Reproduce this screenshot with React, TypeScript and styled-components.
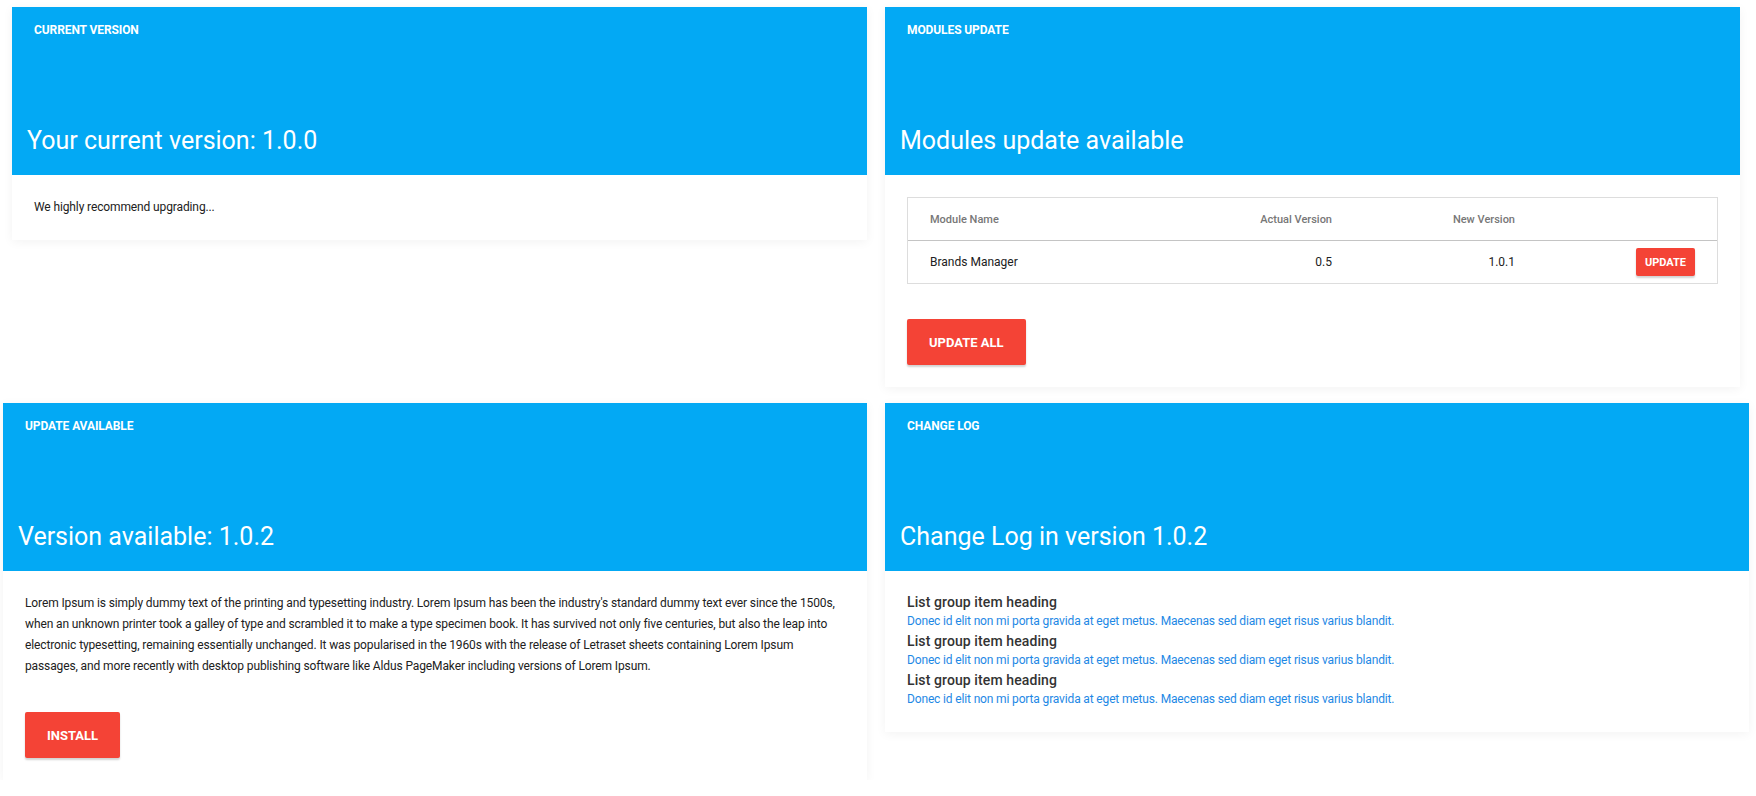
import React from "react";
import styled, { createGlobalStyle } from "styled-components";

const GlobalStyle = createGlobalStyle`
  body {
    margin: 0;
    background: #ffffff;
    font-family: Roboto, "Liberation Sans", Arial, sans-serif;
    color: #212121;
  }
`;

const Board = styled.div`
  display: flex;
  flex-direction: column;
  gap: 16px;
  padding-top: 7px;
`;

const Row = styled.div<{ $left: number; $right: number }>`
  display: flex;
  align-items: flex-start;
  gap: 18px;
  padding: 0 ${(p) => p.$right}px 0 ${(p) => p.$left}px;
`;

const Card = styled.section`
  flex: 1;
  min-width: 0;
  background: #ffffff;
  box-shadow: 0 2px 10px rgba(0, 0, 0, 0.05);
`;

const CardHeader = styled.header`
  height: 168px;
  box-sizing: border-box;
  background: #03a9f4;
  color: #ffffff;
  display: flex;
  flex-direction: column;
  justify-content: space-between;
  padding: 15px 15px 18px;
`;

const Kicker = styled.div`
  padding-left: 7px;
  font-size: 12px;
  font-weight: 700;
  line-height: 16px;
  letter-spacing: -0.1px;
  text-transform: uppercase;
`;

const Headline = styled.h2`
  margin: 0;
  font-size: 25px;
  font-weight: 400;
  line-height: 32px;
`;

const CardBody = styled.div`
  padding: 22px;
`;

const Text = styled.p`
  margin: 0;
  font-size: 12px;
  line-height: 21px;
  letter-spacing: -0.12px;
  color: #212121;
`;

const Actions = styled.div`
  margin-top: 35px;
  display: flex;
`;

const RaisedButton = styled.button<{ $small?: boolean }>`
  border: none;
  border-radius: 2px;
  background: #f44336;
  color: #ffffff;
  font-family: Roboto, "Liberation Sans", Arial, sans-serif;
  font-weight: 700;
  text-transform: uppercase;
  cursor: pointer;
  box-shadow: 0 2px 2px rgba(0, 0, 0, 0.18);
  height: ${(p) => (p.$small ? 28 : 46)}px;
  padding: 0 ${(p) => (p.$small ? 9 : 22)}px;
  font-size: ${(p) => (p.$small ? 11 : 13)}px;
`;

const TableBox = styled.div`
  border: 1px solid #dddddd;
`;

const TableRow = styled.div<{ $head?: boolean }>`
  display: grid;
  grid-template-columns: 1fr 183px 183px 180px;
  align-items: center;
  height: 42px;
  border-bottom: ${(p) => (p.$head ? "1px solid #c4c4c4" : "none")};
`;

const Cell = styled.div<{ $head?: boolean; $right?: boolean }>`
  padding: 0 22px;
  text-align: ${(p) => (p.$right ? "right" : "left")};
  font-size: ${(p) => (p.$head ? 11 : 12)}px;
  font-weight: ${(p) => (p.$head ? 500 : 400)};
  color: ${(p) => (p.$head ? "#777777" : "#212121")};
  display: flex;
  justify-content: ${(p) => (p.$right ? "flex-end" : "flex-start")};
`;

const LogList = styled.div`
  display: flex;
  flex-direction: column;
`;

const LogHeading = styled.h4`
  margin: 0;
  font-size: 14px;
  font-weight: 500;
  line-height: 18px;
  letter-spacing: 0.1px;
  color: #333333;
`;

const LogText = styled.p`
  margin: 0;
  font-size: 12px;
  line-height: 21px;
  letter-spacing: -0.15px;
  color: #1e88e5;
`;

const lorem =
  "Lorem Ipsum is simply dummy text of the printing and typesetting industry. Lorem Ipsum has been the industry's standard dummy text ever since the 1500s, when an unknown printer took a galley of type and scrambled it to make a type specimen book. It has survived not only five centuries, but also the leap into electronic typesetting, remaining essentially unchanged. It was popularised in the 1960s with the release of Letraset sheets containing Lorem Ipsum passages, and more recently with desktop publishing software like Aldus PageMaker including versions of Lorem Ipsum.";

const modules = [{ name: "Brands Manager", actual: "0.5", next: "1.0.1" }];

const changes = [1, 2, 3];

const App = () => {
  return (
    <>
      <GlobalStyle />
      <Board>
        <Row $left={12} $right={16}>
          <Card>
            <CardHeader>
              <Kicker>Current Version</Kicker>
              <Headline>Your current version: 1.0.0</Headline>
            </CardHeader>
            <CardBody>
              <Text>We highly recommend upgrading...</Text>
            </CardBody>
          </Card>
          <Card>
            <CardHeader>
              <Kicker>Modules Update</Kicker>
              <Headline>Modules update available</Headline>
            </CardHeader>
            <CardBody>
              <TableBox>
                <TableRow $head>
                  <Cell $head>Module Name</Cell>
                  <Cell $head $right>
                    Actual Version
                  </Cell>
                  <Cell $head $right>
                    New Version
                  </Cell>
                  <Cell $head />
                </TableRow>
                {modules.map((m) => (
                  <TableRow key={m.name}>
                    <Cell>{m.name}</Cell>
                    <Cell $right>{m.actual}</Cell>
                    <Cell $right>{m.next}</Cell>
                    <Cell $right>
                      <RaisedButton $small>Update</RaisedButton>
                    </Cell>
                  </TableRow>
                ))}
              </TableBox>
              <Actions>
                <RaisedButton>Update All</RaisedButton>
              </Actions>
            </CardBody>
          </Card>
        </Row>
        <Row $left={3} $right={7}>
          <Card>
            <CardHeader>
              <Kicker>Update Available</Kicker>
              <Headline>Version available: 1.0.2</Headline>
            </CardHeader>
            <CardBody>
              <Text>{lorem}</Text>
              <Actions>
                <RaisedButton>Install</RaisedButton>
              </Actions>
            </CardBody>
          </Card>
          <Card>
            <CardHeader>
              <Kicker>Change Log</Kicker>
              <Headline>Change Log in version 1.0.2</Headline>
            </CardHeader>
            <CardBody>
              <LogList>
                {changes.map((i) => (
                  <div key={i}>
                    <LogHeading>List group item heading</LogHeading>
                    <LogText>
                      Donec id elit non mi porta gravida at eget metus. Maecenas sed diam eget risus varius blandit.
                    </LogText>
                  </div>
                ))}
              </LogList>
            </CardBody>
          </Card>
        </Row>
      </Board>
    </>
  );
};

export default App;
